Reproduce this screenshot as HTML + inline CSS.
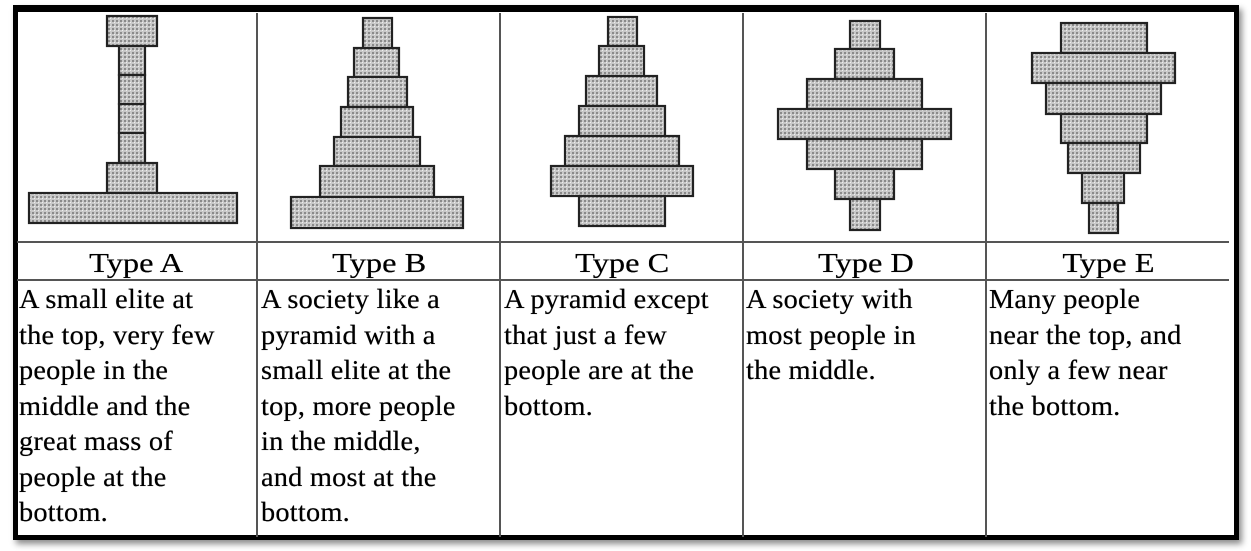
<!DOCTYPE html>
<html><head><meta charset="utf-8"><style>
body{margin:0;width:1251px;height:551px;background:#fff;position:relative;overflow:hidden;font-family:"Liberation Serif",serif;color:#000}
.frame{position:absolute;left:13px;top:5px;width:1216px;height:523px;border:5px solid #000;border-top-width:7px;box-shadow:3px 4px 6px rgba(0,0,0,.45)}
.v{position:absolute;top:13px;width:2px;height:524px;background:#555}
.h{position:absolute;left:17px;width:1212px;height:2px;background:#555}
.lab{position:absolute;top:246px;width:243px;text-align:center;font-size:27px;line-height:34px}
.lab span{display:inline-block;transform:scaleX(1.2);text-shadow:0 0 .4px #000}
.d{position:absolute;top:282px;font-family:"Liberation Serif",serif;font-size:27px;line-height:35.5px;white-space:pre;transform:scaleX(1.05);transform-origin:left top;letter-spacing:.2px;text-shadow:0 0 .5px #000}
</style></head><body>
<div class="frame"></div>
<div class="v" style="left:256px"></div>
<div class="v" style="left:499px"></div>
<div class="v" style="left:742px"></div>
<div class="v" style="left:985px"></div>
<div class="h" style="top:241px"></div>
<div class="h" style="top:279px"></div>
<svg width="1251" height="551" style="position:absolute;left:0;top:0">
<defs><pattern id="p" width="4" height="4" patternUnits="userSpaceOnUse"><rect width="4" height="4" fill="#c8c8c8"/><rect width="2" height="2" fill="#8a8a8a"/><rect x="2" y="2" width="1" height="1" fill="#eee"/></pattern></defs>
<g fill="url(#p)" stroke="#222" stroke-width="2.2">
<rect x="107" y="16" width="50" height="30"/><rect x="119" y="46" width="26" height="29"/><rect x="119" y="75" width="26" height="29"/><rect x="119" y="104" width="26" height="29"/><rect x="119" y="133" width="26" height="30"/><rect x="107" y="163" width="50" height="30"/><rect x="29" y="193" width="208" height="30"/>
<rect x="363" y="18" width="29" height="30"/><rect x="354" y="48" width="45" height="29"/><rect x="348" y="77" width="59" height="30"/><rect x="341" y="107" width="72" height="30"/><rect x="334" y="137" width="86" height="29"/><rect x="320" y="166" width="114" height="31"/><rect x="291" y="197" width="172" height="31"/>
<rect x="608" y="17" width="29" height="29"/><rect x="599" y="46" width="45" height="30"/><rect x="586" y="76" width="71" height="30"/><rect x="579" y="106" width="86" height="30"/><rect x="565" y="136" width="114" height="30"/><rect x="551" y="166" width="142" height="30"/><rect x="579" y="196" width="86" height="30"/>
<rect x="850" y="21" width="30" height="28"/><rect x="835" y="49" width="59" height="30"/><rect x="807" y="79" width="115" height="30"/><rect x="778" y="109" width="173" height="30"/><rect x="807" y="139" width="115" height="30"/><rect x="835" y="169" width="59" height="30"/><rect x="850" y="199" width="30" height="31"/>
<rect x="1061" y="23" width="86" height="30"/><rect x="1032" y="53" width="143" height="30"/><rect x="1046" y="83" width="115" height="31"/><rect x="1061" y="114" width="86" height="29"/><rect x="1068" y="143" width="72" height="30"/><rect x="1082" y="173" width="42" height="30"/><rect x="1089" y="203" width="29" height="30"/>
</g></svg>
<div class="lab" style="left:15px"><span>Type A</span></div>
<div class="lab" style="left:258px"><span>Type B</span></div>
<div class="lab" style="left:501px"><span>Type C</span></div>
<div class="lab" style="left:744px"><span>Type D</span></div>
<div class="lab" style="left:987px"><span>Type E</span></div>
<div class="d" style="left:19px">A small elite at
the top, very few
people in the
middle and the
great mass of
people at the
bottom.</div>
<div class="d" style="left:261px">A society like a
pyramid with a
small elite at the
top, more people
in the middle,
and most at the
bottom.</div>
<div class="d" style="left:504px">A pyramid except
that just a few
people are at the
bottom.</div>
<div class="d" style="left:746px">A society with
most people in
the middle.</div>
<div class="d" style="left:989px">Many people
near the top, and
only a few near
the bottom.</div>
</body></html>
